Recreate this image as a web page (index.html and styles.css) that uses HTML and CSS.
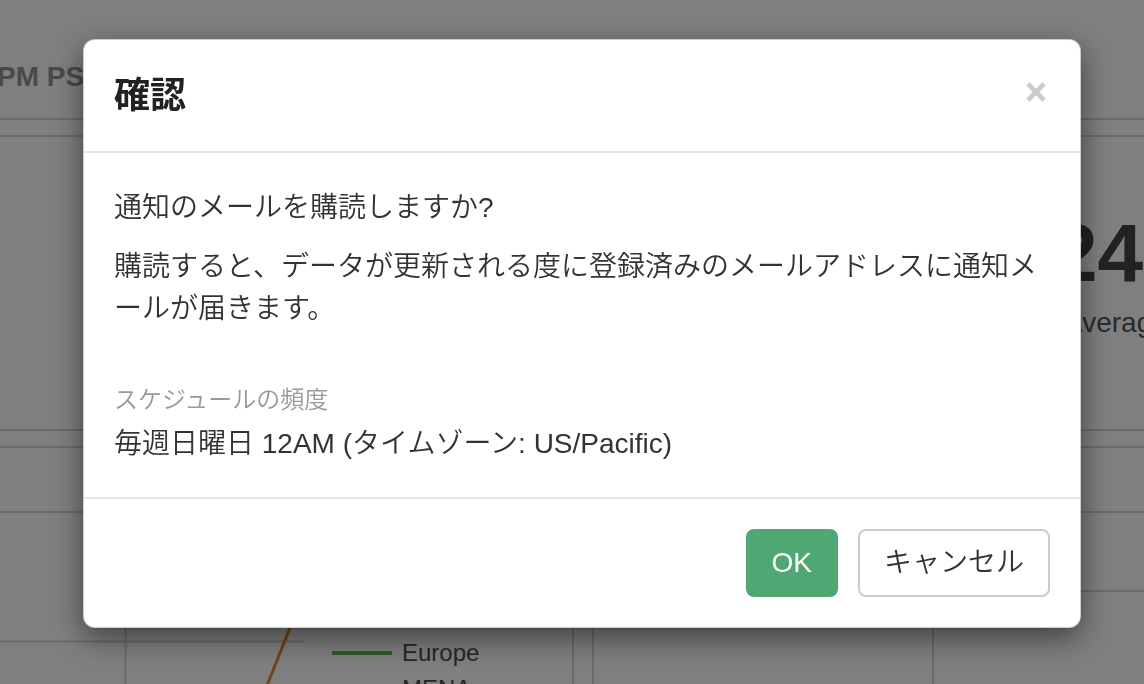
FILE: index.html
```html
<!DOCTYPE html>
<html lang="ja">
<head>
<meta charset="utf-8">
<title>確認</title>
<link rel="stylesheet" href="styles.css">
</head>
<body>
<div class="page">
  <header class="topbar"><span class="updated">PM PST</span></header>
  <div class="subbar"></div>
  <section class="kpis">
    <div class="kpi kpi-main"></div>
    <div class="kpi kpi-avg">
      <div class="kpi-value">24</div>
      <div class="kpi-label">Average</div>
    </div>
  </section>
  <div class="gap-row"></div>
  <section class="charts">
    <div class="chart-card">
      <div class="chart-head"></div>
      <div class="chart-body">
        <svg class="chart-svg" width="332" height="240" viewBox="0 0 332 240">
          <line x1="125.5" y1="0" x2="125.5" y2="240" stroke="#d6d6d6" stroke-width="2"/>
          <line x1="0" y1="128.5" x2="305" y2="128.5" stroke="#d6d6d6" stroke-width="2"/>
          <line x1="312" y1="60" x2="256" y2="200" stroke="#e08a34" stroke-width="3"/>
        </svg>
        <ul class="legend">
          <li><span class="swatch europe"></span>Europe</li>
          <li><span class="swatch mena"></span>MENA</li>
        </ul>
      </div>
    </div>
    <div class="chart-card chart-right">
      <div class="chart-head"></div>
      <div class="chart-split">
        <div class="split-a"></div>
        <div class="split-b"><div class="mini"></div></div>
      </div>
    </div>
  </section>
</div>

<div class="backdrop"></div>

<div class="modal-layer">
  <div class="modal" role="dialog">
    <div class="modal-header">
      <h4 class="modal-title">確認</h4>
      <button class="close" type="button" aria-label="Close">
        <svg width="20" height="20" viewBox="0 0 20 20">
          <path d="M2 2 L18 18 M18 2 L2 18" stroke="#cbcbcb" stroke-width="4.6" fill="none"/>
        </svg>
      </button>
    </div>
    <div class="modal-body">
      <p>通知のメールを購読しますか?</p>
      <p>購読すると、データが更新される度に登録済みのメールアドレスに通知メールが届きます。</p>
      <div class="field">
        <div class="field-label">スケジュールの頻度</div>
        <div class="field-value">毎週日曜日 12AM (タイムゾーン: US/Pacific)</div>
      </div>
    </div>
    <div class="modal-footer">
      <button class="btn btn-ok" type="button">OK</button>
      <button class="btn btn-cancel" type="button">キャンセル</button>
    </div>
  </div>
</div>
</body>
</html>
```

FILE: styles.css
```css
* {
  box-sizing: border-box;
}

html,
body {
  margin: 0;
  height: 100%;
  overflow: hidden;
}

body {
  font-family: "Liberation Sans", "Noto Sans CJK JP", sans-serif;
  background: #fff;
  color: #333;
}

/* ---------- background dashboard ---------- */
.page {
  width: 100%;
}

.topbar {
  height: 120px;
  padding-top: 61px;
  border-bottom: 2px solid #d6d6d6;
}

.updated {
  display: block;
  margin-left: -3px;
  font-size: 28px;
  font-weight: bold;
  line-height: 32px;
  color: #929292;
  white-space: nowrap;
}

.subbar {
  height: 17px;
  border-bottom: 2px solid #d6d6d6;
}

.kpis {
  display: flex;
  height: 294px;
  border-bottom: 2px solid #d6d6d6;
}

.kpi-main {
  flex: 1;
}

.kpi-avg {
  flex: 0 0 260px;
  min-width: 0;
  padding: 75px 0 0 180px;
  white-space: nowrap;
}

.kpi-value {
  margin-left: -12px;
  font-size: 82px;
  line-height: 82px;
  font-weight: bold;
  color: #444;
}

.kpi-label {
  margin-top: 13px;
  font-size: 28px;
  line-height: 32px;
  color: #555;
}

.gap-row {
  height: 17px;
  border-bottom: 2px solid #d6d6d6;
}

.charts {
  display: grid;
  grid-template-columns: 574px 1fr;
  column-gap: 18px;
}

.chart-card {
  border-right: 2px solid #d6d6d6;
  height: 260px;
}

.chart-right {
  border-right: 0;
  border-left: 2px solid #d6d6d6;
}

.chart-head {
  height: 65px;
  border-bottom: 2px solid #d6d6d6;
}

.chart-body {
  display: flex;
}

.chart-svg {
  display: block;
  flex: 0 0 332px;
}

.legend {
  list-style: none;
  margin: 0;
  padding: 122px 0 0;
}

.legend li {
  display: flex;
  align-items: center;
  height: 36px;
  font-size: 24px;
  color: #4d4d4d;
}

.swatch {
  width: 60px;
  height: 4px;
  margin-right: 10px;
}

.swatch.europe {
  background: #5cb04e;
}

.swatch.mena {
  background: #4a90d9;
}

.chart-split {
  display: grid;
  grid-template-columns: 340px 1fr;
  height: 200px;
}

.split-a {
  border-right: 2px solid #d6d6d6;
}

.split-b {
  padding-top: 77px;
}

.mini {
  height: 120px;
  border-top: 2px solid #d6d6d6;
}

/* ---------- modal ---------- */
.backdrop {
  position: fixed;
  inset: 0;
  background: rgba(0, 0, 0, 0.5);
}

.modal-layer {
  position: fixed;
  inset: 0;
  padding: 39px 0 0 83px;
}

.modal {
  width: 998px;
  background: #fff;
  border: 1px solid rgba(0, 0, 0, 0.2);
  border-radius: 12px;
  box-shadow: 0 10px 30px rgba(0, 0, 0, 0.5);
}

.modal-header {
  display: flex;
  justify-content: space-between;
  align-items: flex-start;
  padding: 30px;
  border-bottom: 2px solid #e5e5e5;
}

.modal-title {
  margin: 0;
  font-size: 36px;
  line-height: 51px;
  font-weight: bold;
  color: #222;
}

.close {
  margin: 12px 4px 0 0;
  padding: 0;
  border: 0;
  background: none;
  line-height: 0;
}

.modal-body {
  padding: 34px 30px 33px;
  font-weight: 350;
}

.modal-body p {
  margin: 0 0 17px;
  font-size: 28px;
  line-height: 42px;
  color: #333;
}

.field {
  margin-top: 53px;
}

.field-label {
  font-size: 24px;
  line-height: 34px;
  color: #999;
}

.field-value {
  margin-top: 7px;
  font-size: 28px;
  line-height: 40px;
  color: #333;
}

.modal-footer {
  display: flex;
  justify-content: flex-end;
  gap: 20px;
  padding: 30px;
  border-top: 2px solid #e5e5e5;
}

.btn {
  height: 68px;
  padding: 0 24px;
  border: 2px solid;
  border-radius: 8px;
  font-family: inherit;
  font-size: 28px;
  font-weight: 350;
  line-height: 64px;
  cursor: pointer;
}

.btn-ok {
  background: #4fa874;
  border-color: #4fa874;
  color: #fff;
}

.btn-cancel {
  background: #fff;
  border-color: #cccccc;
  color: #333;
}
```
